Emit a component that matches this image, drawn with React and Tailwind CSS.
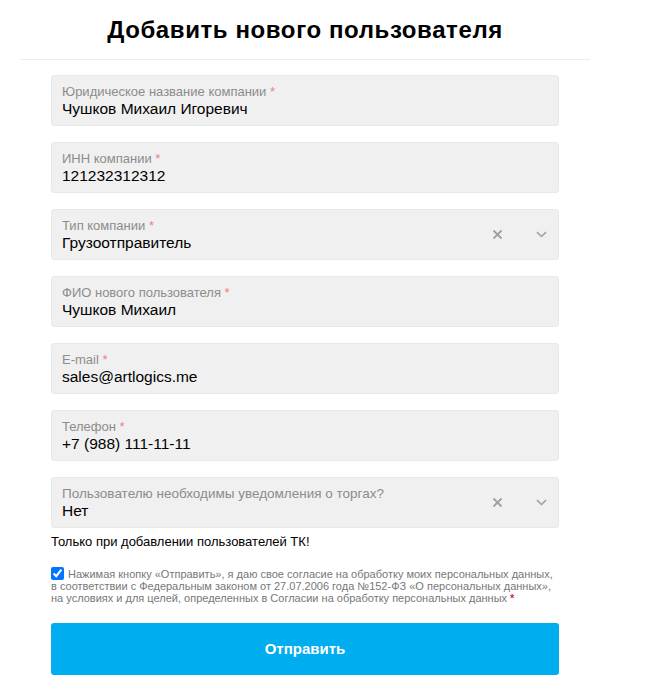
import React from 'react';

const fields = [
  { label: 'Юридическое название компании', value: 'Чушков Михаил Игоревич', required: true },
  { label: 'ИНН компании', value: '121232312312', required: true },
  { label: 'Тип компании', value: 'Грузоотправитель', required: true, select: true },
  { label: 'ФИО нового пользователя', value: 'Чушков Михаил', required: true },
  { label: 'E-mail', value: 'sales@artlogics.me', required: true },
  { label: 'Телефон', value: '+7 (988) 111-11-11', required: true },
  { label: 'Пользователю необходимы уведомления о торгах?', value: 'Нет', select: true, big: true },
];

const Field = ({ f }) => (
  <div className="h-[51px] bg-[#f0f0f0] border border-[#e8e8e8] rounded-[3px] flex items-center pl-[10px] pr-[8px]">
    <div className="flex-1 flex flex-col pt-[1px]">
      <span className={`${f.big ? 'text-[13.5px]' : 'text-[13px]'} leading-[15px] text-[#8c8c8c]`}>
        {f.label}
        {f.required && <span className="text-[#f08080]"> *</span>}
      </span>
      <span className="text-[15.5px] leading-[19px] text-black">{f.value}</span>
    </div>
    {f.select && (
      <div className="flex items-center">
        <svg width="11" height="11" viewBox="0 0 11 11" className="mr-[33px]">
          <path d="M1.5 1.5L9.5 9.5M9.5 1.5L1.5 9.5" stroke="#a0a0a0" strokeWidth="1.8" />
        </svg>
        <svg width="11" height="7" viewBox="0 0 11 7" className="mr-[3px]">
          <path d="M1 1.2L5.5 5.5L10 1.2" stroke="#a0a0a0" strokeWidth="1.6" fill="none" />
        </svg>
      </div>
    )}
  </div>
);

const App = () => {
  return (
    <div className="min-h-screen bg-white" style={{ fontFamily: '"Liberation Sans", Arial, sans-serif' }}>
      <div className="w-[570px] ml-[20px]">
        <h1 className="text-[24px] font-bold text-black text-center pt-[15px] pb-[14px] leading-[30px] tracking-[0.6px]">
          Добавить нового пользователя
        </h1>
        <div className="h-px bg-[#ececec]" />
        <div className="px-[31px] pt-[15px]">
          <div className="flex flex-col gap-[16px] w-[508px]">
            {fields.map((f) => (
              <Field key={f.label} f={f} />
            ))}
          </div>
          <p className="text-[13px] text-black mt-[6px] leading-[16px]">Только при добавлении пользователей ТК!</p>
          <div className="mt-[17px] text-[11px] leading-[12px] text-[#777] w-[510px]">
            <input type="checkbox" defaultChecked className="w-[13px] h-[13px] mr-[4px] align-[-2px] accent-[#0075ff]" />
            Нажимая кнопку «Отправить», я даю свое согласие на обработку моих персональных данных, в соответствии с Федеральным законом от 27.07.2006 года №152-ФЗ «О персональных данных», на условиях и для целей, определенных в Согласии на обработку персональных данных
            <span className="text-[#e0245e] font-bold ml-[3px]">*</span>
          </div>
          <button className="mt-[19px] w-[508px] h-[52px] bg-[#00adef] rounded-[3px] text-white font-bold text-[15px]">
            Отправить
          </button>
        </div>
      </div>
    </div>
  );
};

export default App;
